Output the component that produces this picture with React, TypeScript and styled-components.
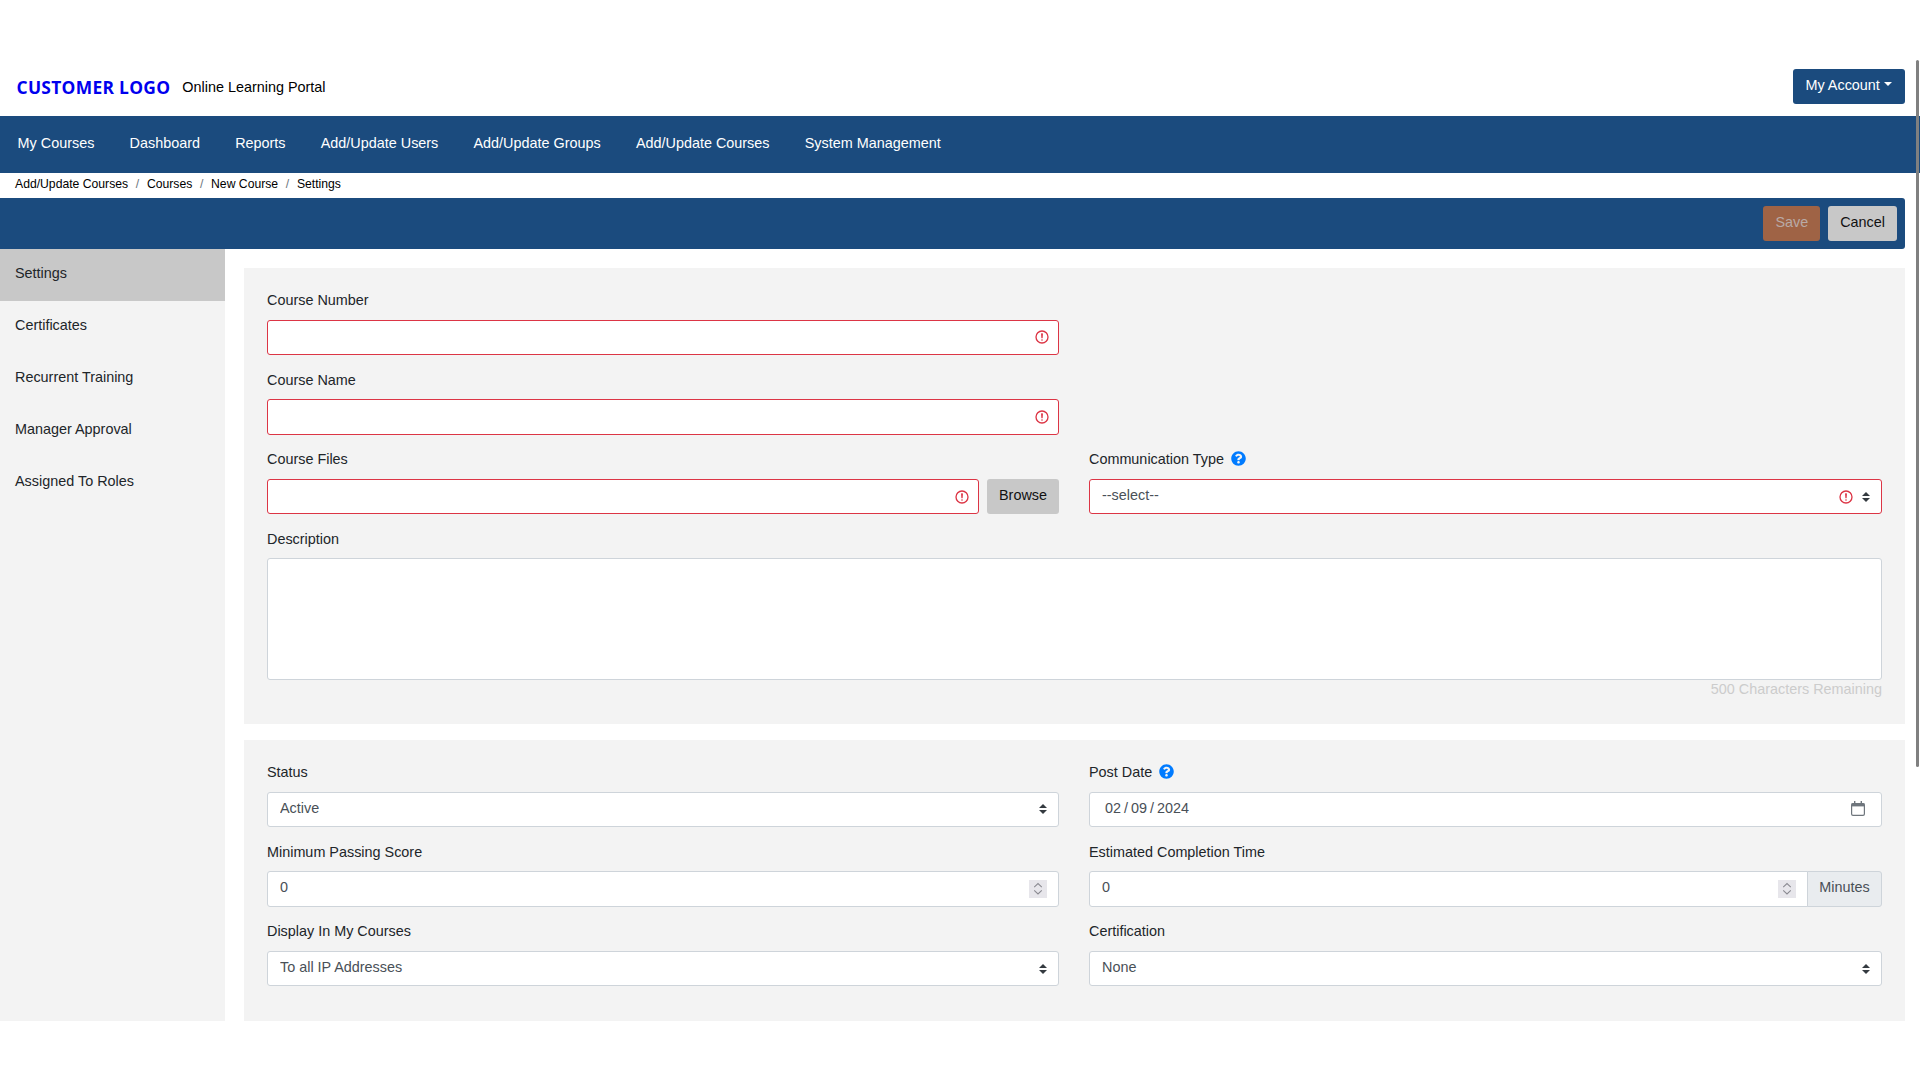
import styled, { createGlobalStyle, css } from "styled-components";
import { FaQuestionCircle } from "react-icons/fa";

const GlobalStyle = createGlobalStyle`
  * {
    box-sizing: border-box;
  }
  html,
  body {
    margin: 0;
    padding: 0;
    background-color: #fff;
    color: #212529;
    font-family: "Liberation Sans", Arial, sans-serif;
    font-size: 14.4px;
    line-height: 1.5;
  }
`;

const BRAND = "#1b4b7e";

const INVALID_ICON = `url("data:image/svg+xml,%3csvg xmlns='http://www.w3.org/2000/svg' width='12' height='12' fill='none' stroke='%23dc3545' viewBox='0 0 12 12'%3e%3ccircle cx='6' cy='6' r='4.5'/%3e%3cpath stroke-linejoin='round' d='M5.8 3.6h.4L6 6.5z'/%3e%3ccircle cx='6' cy='8.2' r='.6' fill='%23dc3545' stroke='none'/%3e%3c/svg%3e")`;
const SELECT_ARROWS = `url("data:image/svg+xml,%3csvg xmlns='http://www.w3.org/2000/svg' width='4' height='5' viewBox='0 0 4 5'%3e%3cpath fill='%23343a40' d='M2 0L0 2h4zm0 5L0 3h4z'/%3e%3c/svg%3e")`;
const SPIN_ICON = `url("data:image/svg+xml,%3csvg xmlns='http://www.w3.org/2000/svg' width='18' height='18' viewBox='0 0 18 18'%3e%3crect width='18' height='18' fill='%23e7e6eb'/%3e%3cpath fill='none' stroke='%238b8b92' stroke-width='1.1' d='M5.2 7.2L9 3.6l3.8 3.6M5.2 10.4L9 14l3.8-3.6'/%3e%3c/svg%3e")`;
const CALENDAR_ICON = `url("data:image/svg+xml,%3csvg xmlns='http://www.w3.org/2000/svg' width='14' height='15' viewBox='0 0 14 15'%3e%3crect x='.6' y='2.6' width='12.8' height='11.8' rx='1.4' fill='none' stroke='%236f767d' stroke-width='1.2'/%3e%3crect x='.6' y='2.4' width='12.8' height='3' fill='%236f767d'/%3e%3crect x='3' y='0' width='1.4' height='3' fill='%236f767d'/%3e%3crect x='9.6' y='0' width='1.4' height='3' fill='%236f767d'/%3e%3c/svg%3e")`;

const Page = styled.div`
  position: relative;
  height: 1080px;
  overflow: hidden;
`;

const ScrollThumb = styled.div`
  position: absolute;
  top: 60px;
  right: 1px;
  width: 3px;
  height: 707px;
  border-radius: 2px;
  background-color: #808080;
`;

const TopHeader = styled.header`
  display: flex;
  align-items: center;
  justify-content: space-between;
  height: 116px;
  padding: 69px 15px 12px 16.5px;
`;

const Brand = styled.div`
  display: flex;
  align-items: center;
  margin-top: 2px;
`;

const Logo = styled.span`
  color: #0000ee;
  font-family: "Open Sans", sans-serif;
  font-size: 17.4px;
  font-weight: 700;
  letter-spacing: 0.3px;
  margin-right: 12px;
`;

const PortalName = styled.span`
  color: #000;
`;

const AccountButton = styled.button`
  height: 35px;
  width: 112px;
  padding: 0 1px 2px 0;
  border: 0;
  border-radius: 3px;
  background-color: ${BRAND};
  color: #fff;
  font: inherit;

  &::after {
    content: "";
    display: inline-block;
    margin-left: 0.255em;
    vertical-align: 0.255em;
    border-top: 0.3em solid;
    border-right: 0.3em solid transparent;
    border-left: 0.3em solid transparent;
  }
`;

const MainNav = styled.nav`
  display: flex;
  align-items: center;
  height: 57px;
  padding-bottom: 1px;
  background-color: ${BRAND};
`;

const NavLink = styled.a`
  padding: 0 17.6px;
  color: #fff;
`;

const Crumbs = styled.ol`
  display: flex;
  align-items: center;
  height: 25px;
  margin: 0;
  padding: 0 15px 2px;
  list-style: none;
  font-size: 12.2px;
  color: #000;
`;

const Crumb = styled.li`
  & + &::before {
    content: "/";
    padding: 0 7.7px;
    color: #6c757d;
  }
`;

const Toolbar = styled.div`
  display: flex;
  align-items: center;
  justify-content: flex-end;
  gap: 8px;
  height: 51px;
  margin-right: 15px;
  padding-right: 8px;
  border-radius: 0 3px 3px 0;
  background-color: ${BRAND};
`;

const ToolButton = styled.button<{ $save?: boolean }>`
  height: 35px;
  padding: 0 12px 1px;
  border: 0;
  border-radius: 3px;
  font: inherit;
  background-color: #c8c8c8;
  color: #111;
  ${(p) =>
    p.$save &&
    css`
      background-color: #9f6345;
      color: #b9aaa5;
    `}
`;

const Body = styled.div`
  display: flex;
  height: 772px;
`;

const Sidebar = styled.aside`
  width: 225px;
  flex-shrink: 0;
  background-color: #f3f3f3;
`;

const SideItem = styled.a<{ $active?: boolean }>`
  display: block;
  height: 52px;
  padding: 14px 15px;
  background-color: ${(p) => (p.$active ? "#c8c8c8" : "transparent")};
  color: #212529;
`;

const Content = styled.main`
  flex: 1;
  padding: 19px 15px 0 19px;
`;

const Panel = styled.section<{ $tall?: boolean }>`
  height: ${(p) => (p.$tall ? "456px" : "281px")};
  margin-bottom: 16px;
  padding: 22px 23px 0;
  background-color: #f3f3f3;
`;

const FormRow = styled.div`
  display: grid;
  grid-template-columns: 792px 793px;
  column-gap: 30px;
`;

const Field = styled.div<{ $wide?: boolean; $first?: boolean }>`
  margin-bottom: 14.4px;
  ${(p) =>
    p.$wide &&
    css`
      grid-column: 1 / 3;
    `}
  ${(p) =>
    p.$first &&
    css`
      grid-column: 1;
    `}
`;

const Label = styled.label`
  display: flex;
  align-items: center;
  gap: 8px;
  margin-bottom: 8px;
  color: #212529;
`;

const HelpIcon = styled(FaQuestionCircle)`
  width: 15px;
  height: 15px;
  margin-top: -2px;
  margin-left: -1px;
  color: #007bff;
`;

const controlStyles = css<{ $invalid?: boolean }>`
  display: block;
  width: 100%;
  height: 35.6px;
  padding: 4.4px 12px 6.4px;
  border: 1px solid ${(p) => (p.$invalid ? "#dc3545" : "#ced4da")};
  border-radius: 3px;
  background-color: #fff;
  color: #495057;
  font: inherit;
  outline: none;
`;

const Input = styled.input<{ $invalid?: boolean }>`
  ${controlStyles}
  ${(p) =>
    p.$invalid &&
    css`
      padding-right: 32px;
      background-image: ${INVALID_ICON};
      background-repeat: no-repeat;
      background-position: right 8px center;
      background-size: 16px 16px;
    `}
`;

const NumberInput = styled.input`
  ${controlStyles}
  padding-top: 3.4px;
  padding-bottom: 7.4px;
  appearance: textfield;
  background-image: ${SPIN_ICON};
  background-repeat: no-repeat;
  background-position: right 11px center;
  background-size: 18px 18px;

  &::-webkit-inner-spin-button,
  &::-webkit-outer-spin-button {
    appearance: none;
    margin: 0;
  }
`;

const DateInput = styled.input`
  ${controlStyles}

  &::-webkit-datetime-edit {
    padding-left: 2px;
  }

  &::-webkit-datetime-edit-text {
    padding: 0 2px;
  }

  &::-webkit-calendar-picker-indicator {
    width: 14px;
    height: 15px;
    margin: 1px 4px 0 0;
    padding: 0;
    background-image: ${CALENDAR_ICON};
    background-size: 14px 15px;
  }
`;

const Select = styled.select<{ $invalid?: boolean }>`
  ${controlStyles}
  appearance: none;
  background-repeat: no-repeat;
  background-image: ${(p) =>
    p.$invalid ? `${SELECT_ARROWS}, ${INVALID_ICON}` : SELECT_ARROWS};
  background-position: ${(p) =>
    p.$invalid
      ? "right 11.5px center, right 27.5px center"
      : "right 11.5px center"};
  background-size: ${(p) => (p.$invalid ? "8px 10px, 16px 16px" : "8px 10px")};
`;

const TextArea = styled.textarea`
  ${controlStyles}
  height: 122px;
  resize: none;
`;

const Remaining = styled.div`
  margin-top: -1px;
  color: #ccc;
  text-align: right;
`;

const InputGroup = styled.div`
  display: flex;
  gap: 8px;
`;

const JoinedGroup = styled.div`
  display: flex;

  input {
    flex: 1;
    border-radius: 3px 0 0 3px;
  }
`;

const BrowseButton = styled.button`
  flex-shrink: 0;
  width: 72px;
  height: 35.6px;
  padding: 0 0 2px;
  border: 0;
  border-radius: 3px;
  background-color: #c8c8c8;
  color: #111;
  font: inherit;
`;

const Addon = styled.span`
  display: flex;
  align-items: center;
  justify-content: center;
  width: 75px;
  height: 35.6px;
  margin-left: -1px;
  padding-bottom: 2px;
  border: 1px solid #ced4da;
  border-radius: 0 3px 3px 0;
  background-color: #e9ecef;
  color: #495057;
`;

const NAV_ITEMS = [
  "My Courses",
  "Dashboard",
  "Reports",
  "Add/Update Users",
  "Add/Update Groups",
  "Add/Update Courses",
  "System Management",
];

const CRUMBS = ["Add/Update Courses", "Courses", "New Course", "Settings"];

const SIDE_ITEMS = [
  "Settings",
  "Certificates",
  "Recurrent Training",
  "Manager Approval",
  "Assigned To Roles",
];

export default function App() {
  return (
    <Page>
      <GlobalStyle />
      <TopHeader>
        <Brand>
          <Logo>CUSTOMER LOGO</Logo>
          <PortalName>Online Learning Portal</PortalName>
        </Brand>
        <AccountButton>My Account</AccountButton>
      </TopHeader>
      <MainNav>
        {NAV_ITEMS.map((item) => (
          <NavLink key={item}>{item}</NavLink>
        ))}
      </MainNav>
      <Crumbs>
        {CRUMBS.map((item) => (
          <Crumb key={item}>{item}</Crumb>
        ))}
      </Crumbs>
      <Toolbar>
        <ToolButton $save>Save</ToolButton>
        <ToolButton>Cancel</ToolButton>
      </Toolbar>
      <Body>
        <Sidebar>
          {SIDE_ITEMS.map((item, i) => (
            <SideItem key={item} $active={i === 0}>
              {item}
            </SideItem>
          ))}
        </Sidebar>
        <Content>
          <Panel $tall>
            <FormRow>
              <Field $first>
                <Label>Course Number</Label>
                <Input $invalid />
              </Field>
              <Field $first>
                <Label>Course Name</Label>
                <Input $invalid />
              </Field>
              <Field $first>
                <Label>Course Files</Label>
                <InputGroup>
                  <Input $invalid />
                  <BrowseButton>Browse</BrowseButton>
                </InputGroup>
              </Field>
              <Field>
                <Label>
                  Communication Type <HelpIcon />
                </Label>
                <Select $invalid defaultValue="">
                  <option value="">--select--</option>
                </Select>
              </Field>
              <Field $wide>
                <Label>Description</Label>
                <TextArea />
                <Remaining>500 Characters Remaining</Remaining>
              </Field>
            </FormRow>
          </Panel>
          <Panel>
            <FormRow>
              <Field>
                <Label>Status</Label>
                <Select defaultValue="active">
                  <option value="active">Active</option>
                </Select>
              </Field>
              <Field>
                <Label>
                  Post Date <HelpIcon />
                </Label>
                <DateInput type="date" defaultValue="2024-02-09" />
              </Field>
              <Field>
                <Label>Minimum Passing Score</Label>
                <NumberInput type="number" defaultValue={0} />
              </Field>
              <Field>
                <Label>Estimated Completion Time</Label>
                <JoinedGroup>
                  <NumberInput type="number" defaultValue={0} />
                  <Addon>Minutes</Addon>
                </JoinedGroup>
              </Field>
              <Field>
                <Label>Display In My Courses</Label>
                <Select defaultValue="all">
                  <option value="all">To all IP Addresses</option>
                </Select>
              </Field>
              <Field>
                <Label>Certification</Label>
                <Select defaultValue="none">
                  <option value="none">None</option>
                </Select>
              </Field>
            </FormRow>
          </Panel>
        </Content>
      </Body>
      <ScrollThumb />
    </Page>
  );
}
